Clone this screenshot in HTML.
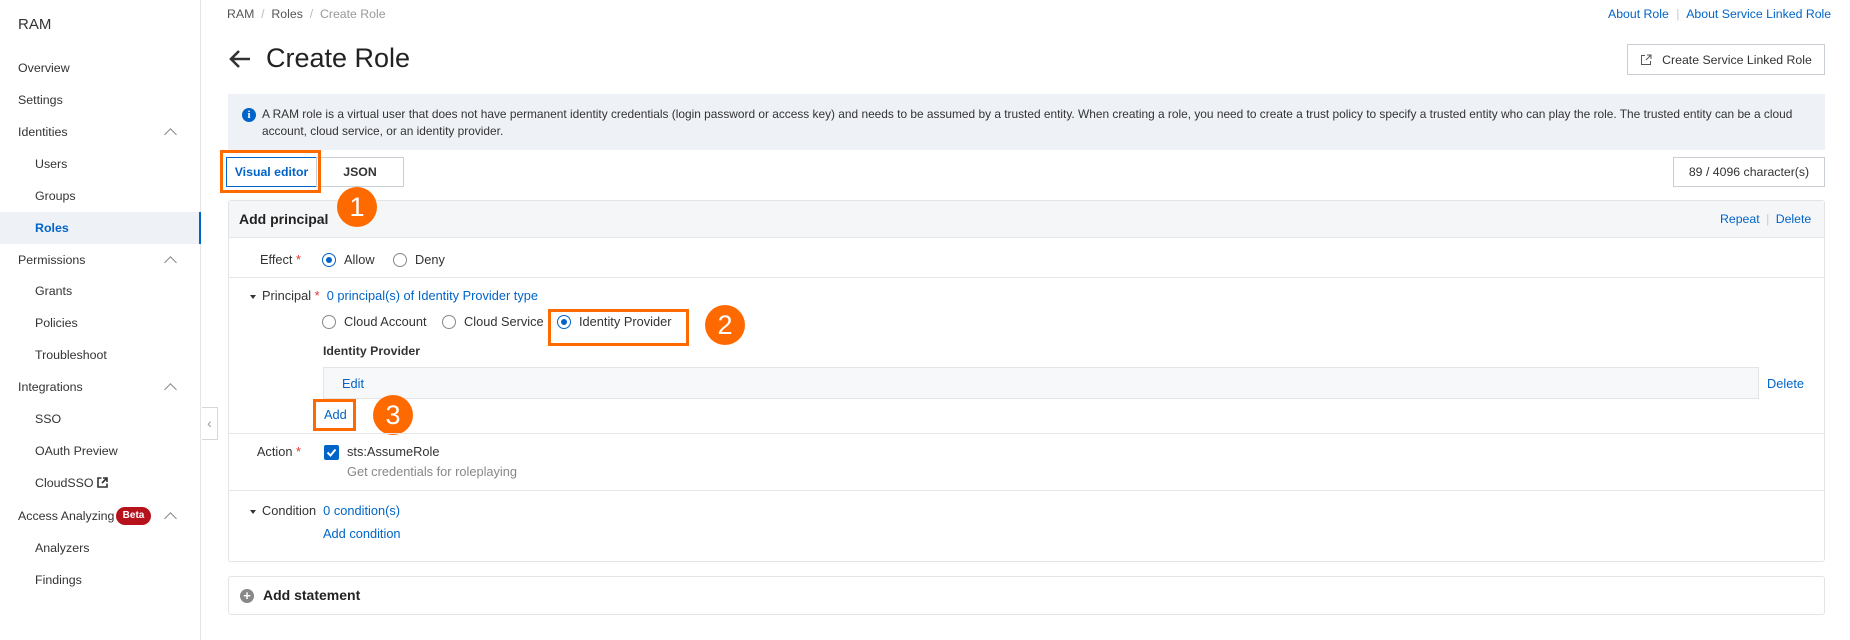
<!DOCTYPE html>
<html><head><meta charset="utf-8"><style>
*{box-sizing:border-box;margin:0;padding:0}
body{width:1850px;height:640px;overflow:hidden;background:#fff;font-family:"Liberation Sans",sans-serif;color:#333;font-size:12.8px;position:relative}
.a{position:absolute;white-space:nowrap}
.side{position:absolute;left:0;top:0;width:201px;height:640px;border-right:1px solid #e3e4e6;background:#fff}
.nav{position:absolute;left:18px;font-size:12.4px;color:#333;line-height:16px}
.sub{left:35px}
.chev{position:absolute;left:166px;width:9px;height:9px;border-left:1.5px solid #888;border-top:1.5px solid #888;transform:rotate(45deg)}
.blue{color:#0064c8}
.btn{position:absolute;border:1px solid #c9cdd4;background:#fff;font-weight:bold;font-size:12.3px;display:flex;align-items:center;justify-content:center}
.sep{position:absolute;left:229px;width:1595px;height:1px;background:#e5e6e8}
.radio{position:absolute;width:14px;height:14px;border:1px solid #888;border-radius:50%;background:#fff}
.radio.on{border-color:#0064c8}
.radio.on:after{content:"";position:absolute;left:3px;top:3px;width:6px;height:6px;border-radius:50%;background:#0064c8}
.ob{position:absolute;border:3px solid #ff6a00}
.num{position:absolute;width:40px;height:40px;border-radius:50%;background:#ff6a00;color:#fff;font-size:27px;display:flex;align-items:center;justify-content:center}
.lbl{position:absolute;text-align:right;width:100px;left:201px}
.star{color:#e0342f}
.tri{display:inline-block;width:0;height:0;border-left:3.5px solid transparent;border-right:3.5px solid transparent;border-top:4px solid #333;margin-right:6px;vertical-align:middle}
</style></head><body>
<div class="side">
<div class="a" style="left:18px;top:16px;font-size:15px;color:#333">RAM</div>
<div class="nav" style="top:60px">Overview</div>
<div class="nav" style="top:92px">Settings</div>
<div class="nav" style="top:124px">Identities</div><div class="chev" style="top:130px"></div>
<div class="nav sub" style="top:156px">Users</div>
<div class="nav sub" style="top:188px">Groups</div>
<div style="position:absolute;left:0;top:212px;width:201px;height:32px;background:#eef1f6;border-right:2px solid #0064c8"></div>
<div class="nav sub blue" style="top:220px;font-weight:bold">Roles</div>
<div class="nav" style="top:252px">Permissions</div><div class="chev" style="top:258px"></div>
<div class="nav sub" style="top:283px">Grants</div>
<div class="nav sub" style="top:315px">Policies</div>
<div class="nav sub" style="top:347px">Troubleshoot</div>
<div class="nav" style="top:379px">Integrations</div><div class="chev" style="top:385px"></div>
<div class="nav sub" style="top:411px">SSO</div>
<div class="nav sub" style="top:443px">OAuth Preview</div>
<div class="nav sub" style="top:475px">CloudSSO <svg width="11" height="11" viewBox="0 0 11 11" style="vertical-align:-1px"><path d="M4.5 1H1v9h9V6.5M6 1h4v4M10 1L5 6" stroke="#333" stroke-width="1.6" fill="none"/></svg></div>
<div class="nav" style="top:508px">Access Analyzing</div>
<div class="a" style="left:116px;top:507px;width:35px;height:18px;border-radius:9px;background:#b5121b;color:#fff;font-size:10px;line-height:18px;text-align:center;font-weight:bold">Beta</div>
<div class="chev" style="top:514px"></div>
<div class="nav sub" style="top:540px">Analyzers</div>
<div class="nav sub" style="top:572px">Findings</div>
</div>
<div class="a" style="left:202px;top:407px;width:16px;height:33px;border:1px solid #d6d8dc;border-left:none;background:#fff;color:#999;font-size:14px;line-height:31px;text-align:center">‹</div>

<div class="a" style="left:227px;top:7px;font-size:12.3px;color:#555">RAM &nbsp;<span style="color:#bbb">/</span>&nbsp; Roles &nbsp;<span style="color:#bbb">/</span>&nbsp; <span style="color:#999">Create Role</span></div>
<div class="a blue" style="left:1608px;top:7px;font-size:12.3px">About Role <span style="color:#ccc;margin:0 4px">|</span> About Service Linked Role</div>
<svg class="a" style="left:228px;top:49px" width="24" height="20" viewBox="0 0 24 20"><path d="M22 10H3M11 2L3 10l8 8" stroke="#333" stroke-width="2.6" fill="none"/></svg>
<div class="a" style="left:266px;top:43px;font-size:27px;color:#222">Create Role</div>
<div class="btn" style="left:1627px;top:44px;width:198px;height:31px;font-weight:normal;color:#333">
<svg width="12" height="12" viewBox="0 0 12 12" style="margin-right:10px"><path d="M5 1.5H1.5v9h9V7M7 1h4v4M11 1L6 6" stroke="#555" fill="none"/></svg>Create Service Linked Role</div>

<div class="a" style="left:228px;top:94px;width:1597px;height:56px;background:#eef1f6"></div>
<div class="a" style="left:242px;top:108px;width:14px;height:14px;border-radius:50%;background:#0064c8;color:#fff;font-size:11px;font-weight:bold;text-align:center;line-height:14px;font-family:'Liberation Serif',serif">i</div>
<div class="a" style="left:262px;top:106px;font-size:11.9px;line-height:17px;color:#333">A RAM role is a virtual user that does not have permanent identity credentials (login password or access key) and needs to be assumed by a trusted entity. When creating a role, you need to create a trust policy to specify a trusted entity who can play the role. The trusted entity can be a cloud<br>account, cloud service, or an identity provider.</div>

<div class="btn" style="left:226px;top:157px;width:91px;height:30px;border-color:#0064c8;color:#0064c8">Visual editor</div>
<div class="btn" style="left:316px;top:157px;width:88px;height:30px;color:#333">JSON</div>
<div class="ob" style="left:220px;top:150px;width:101px;height:43px"></div>
<div class="btn" style="left:1673px;top:157px;width:152px;height:30px;font-weight:normal">89 / 4096 character(s)</div>

<div class="a" style="left:228px;top:200px;width:1597px;height:362px;border:1px solid #e3e4e6;border-radius:3px"></div>
<div class="a" style="left:229px;top:201px;width:1595px;height:37px;background:#f5f6f8;border-bottom:1px solid #e5e6e8"></div>
<div class="a" style="left:239px;top:211px;font-size:14px;font-weight:bold;color:#222">Add principal</div>
<div class="num" style="left:337px;top:187px">1</div>
<div class="a blue" style="left:1720px;top:212px;font-size:12.3px">Repeat <span style="color:#ccc;margin:0 3px">|</span> Delete</div>

<div class="lbl" style="top:252px">Effect <span class="star">*</span></div>
<div class="radio on" style="left:322px;top:253px"></div><div class="a" style="left:344px;top:252px">Allow</div>
<div class="radio" style="left:393px;top:253px"></div><div class="a" style="left:415px;top:252px">Deny</div>
<div class="sep" style="top:277px"></div>

<div class="a" style="left:250px;top:288px"><span class="tri"></span>Principal <span class="star">*</span> <span class="blue">&nbsp;0 principal(s) of Identity Provider type</span></div>
<div class="radio" style="left:322px;top:315px"></div><div class="a" style="left:344px;top:314px">Cloud Account</div>
<div class="radio" style="left:442px;top:315px"></div><div class="a" style="left:464px;top:314px">Cloud Service</div>
<div class="radio on" style="left:557px;top:315px"></div><div class="a" style="left:579px;top:314px">Identity Provider</div>
<div class="ob" style="left:548px;top:309px;width:141px;height:37px"></div>
<div class="num" style="left:705px;top:305px">2</div>
<div class="a" style="left:323px;top:344px;font-weight:bold;font-size:12.3px;color:#333">Identity Provider</div>
<div class="a" style="left:323px;top:367px;width:1436px;height:32px;background:#f7f8fa;border:1px solid #e3e4e6"></div>
<div class="a blue" style="left:342px;top:376px">Edit</div>
<div class="a blue" style="left:1767px;top:376px">Delete</div>
<div class="a blue" style="left:324px;top:407px">Add</div>
<div class="ob" style="left:313px;top:399px;width:43px;height:32px"></div>
<div class="num" style="left:373px;top:395px">3</div>
<div class="sep" style="top:433px"></div>

<div class="lbl" style="top:444px">Action <span class="star">*</span></div>
<div class="a" style="left:324px;top:445px;width:15px;height:15px;background:#0064c8;border-radius:2px"><svg width="15" height="15" viewBox="0 0 15 15"><path d="M3.5 7.5l3 3 5-6" stroke="#fff" stroke-width="2" fill="none"/></svg></div>
<div class="a" style="left:347px;top:444px">sts:AssumeRole</div>
<div class="a" style="left:347px;top:464px;color:#888">Get credentials for roleplaying</div>
<div class="sep" style="top:490px"></div>

<div class="a" style="left:250px;top:503px"><span class="tri"></span>Condition <span class="blue">&nbsp;0 condition(s)</span></div>
<div class="a blue" style="left:323px;top:526px">Add condition</div>

<div class="a" style="left:228px;top:576px;width:1597px;height:39px;border:1px solid #e3e4e6;border-radius:3px"></div>
<div class="a" style="left:240px;top:589px;width:14px;height:14px;border-radius:50%;background:#888;color:#fff;font-size:13px;line-height:14px;text-align:center;font-weight:bold">+</div>
<div class="a" style="left:263px;top:587px;font-size:14px;font-weight:bold;color:#222">Add statement</div>
</body></html>
